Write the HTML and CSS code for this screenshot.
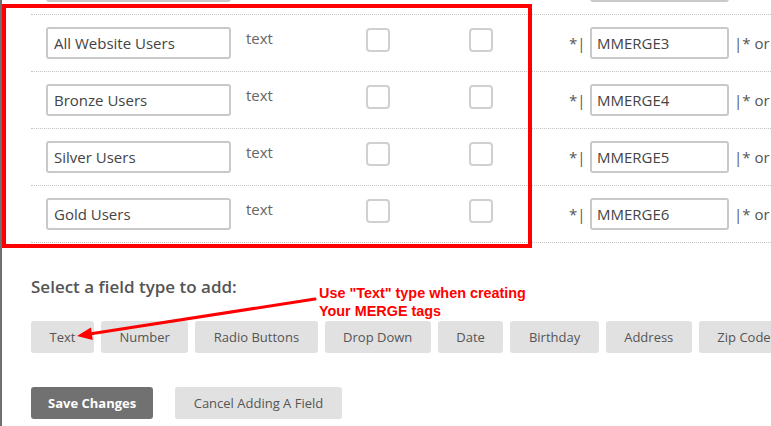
FILE: index.html
```html
<!DOCTYPE html>
<html lang="en">
<head>
<meta charset="utf-8">
<title>Merge fields</title>
<link rel="stylesheet" href="styles.css">
</head>
<body>
<div class="page">
  <div class="fields">
    <div class="row">
      <div class="name-cell"><input class="field-input name-input" type="text" value=""></div>
      <div class="type-label"></div>
      <div class="check-cell"><span class="check"></span></div>
      <div class="check-cell"><span class="check"></span></div>
      <div class="tag-open"></div>
      <div class="tag-cell"><input class="field-input tag-input" type="text" value=""></div>
      <div class="tag-close"></div>
    </div>
    <div class="row">
      <div class="name-cell"><input class="field-input name-input" type="text" value="All Website Users"></div>
      <div class="type-label">text</div>
      <div class="check-cell"><span class="check"></span></div>
      <div class="check-cell"><span class="check"></span></div>
      <div class="tag-open">*|</div>
      <div class="tag-cell"><input class="field-input tag-input" type="text" value="MMERGE3"></div>
      <div class="tag-close">|* or</div>
    </div>
    <div class="row">
      <div class="name-cell"><input class="field-input name-input" type="text" value="Bronze Users"></div>
      <div class="type-label">text</div>
      <div class="check-cell"><span class="check"></span></div>
      <div class="check-cell"><span class="check"></span></div>
      <div class="tag-open">*|</div>
      <div class="tag-cell"><input class="field-input tag-input" type="text" value="MMERGE4"></div>
      <div class="tag-close">|* or</div>
    </div>
    <div class="row">
      <div class="name-cell"><input class="field-input name-input" type="text" value="Silver Users"></div>
      <div class="type-label">text</div>
      <div class="check-cell"><span class="check"></span></div>
      <div class="check-cell"><span class="check"></span></div>
      <div class="tag-open">*|</div>
      <div class="tag-cell"><input class="field-input tag-input" type="text" value="MMERGE5"></div>
      <div class="tag-close">|* or</div>
    </div>
    <div class="row">
      <div class="name-cell"><input class="field-input name-input" type="text" value="Gold Users"></div>
      <div class="type-label">text</div>
      <div class="check-cell"><span class="check"></span></div>
      <div class="check-cell"><span class="check"></span></div>
      <div class="tag-open">*|</div>
      <div class="tag-cell"><input class="field-input tag-input" type="text" value="MMERGE6"></div>
      <div class="tag-close">|* or</div>
    </div>
  </div>

  <h3 class="add-title">Select a field type to add:</h3>
  <div class="types">
    <button class="btn">Text</button>
    <button class="btn">Number</button>
    <button class="btn">Radio Buttons</button>
    <button class="btn">Drop Down</button>
    <button class="btn">Date</button>
    <button class="btn">Birthday</button>
    <button class="btn">Address</button>
    <button class="btn">Zip Code</button>
  </div>

  <div class="actions">
    <button class="btn btn-dark">Save Changes</button>
    <button class="btn">Cancel Adding A Field</button>
  </div>
</div>

<div class="highlight"></div>
<div class="note">Use "Text" type when creating<br>Your MERGE tags</div>
<svg class="arrow" width="771" height="426" viewBox="0 0 771 426" aria-hidden="true">
  <line x1="315" y1="299" x2="91" y2="333.7" stroke="#ff0000" stroke-width="3" stroke-linecap="round"/>
  <polygon points="77,336 92.7,340 90.9,327.6" fill="#ff0000"/>
</svg>
</body>
</html>
```

FILE: styles.css
```css
html, body {
  margin: 0;
  padding: 0;
  background: #ffffff;
}

body {
  position: relative;
  width: 771px;
  height: 426px;
  overflow: hidden;
  font-family: "Open Sans", "Liberation Sans", sans-serif;
}

.page {
  box-sizing: border-box;
  height: 426px;
  border-left: 2px solid #707070;
  padding-left: 29px;
  overflow: hidden;
}

.fields {
  margin-top: -42px;
}

.row {
  display: grid;
  grid-template-columns: 215px 120px 103px 100px 21px 144px 1fr;
  align-items: start;
  box-sizing: border-box;
  height: 57px;
  padding-top: 12px;
  border-bottom: 1px dotted #c4c4c4;
}

.name-cell {
  padding-left: 15px;
}

.field-input {
  display: block;
  box-sizing: border-box;
  height: 32px;
  margin: 0;
  border: 2px solid #c9c9c9;
  border-radius: 3px;
  background: #ffffff;
  font-family: "Open Sans", "Liberation Sans", sans-serif;
  font-size: 15px;
  color: #444444;
  outline: none;
}

.name-input {
  width: 185px;
  padding: 0 6px;
}

.tag-input {
  width: 139px;
  padding: 0 5px;
}

.type-label {
  margin-top: 1px;
  font-size: 15px;
  line-height: 20px;
  color: #666666;
}

.check-cell {
  padding-top: 1px;
}

.check {
  display: block;
  box-sizing: border-box;
  width: 24px;
  height: 24px;
  border: 2px solid #d0d0d0;
  border-radius: 4px;
  background: #ffffff;
}

.tag-open,
.tag-close {
  display: flex;
  align-items: center;
  height: 32px;
  font-size: 15px;
  color: #555555;
  white-space: nowrap;
}

.add-title {
  margin: 32px 0 0;
  font-size: 17px;
  line-height: 24px;
  font-weight: 600;
  color: #555555;
}

.types {
  display: flex;
  gap: 7px;
  margin-top: 22px;
  white-space: nowrap;
}

.btn {
  flex: none;
  height: 32px;
  margin: 0;
  padding: 0 18.5px;
  border: none;
  border-radius: 3px;
  background: #e1e1e1;
  font-family: "Open Sans", "Liberation Sans", sans-serif;
  font-size: 13px;
  color: #555555;
  white-space: nowrap;
}

.actions {
  display: flex;
  gap: 22px;
  margin-top: 34px;
}

.btn-dark {
  padding: 0 17px;
  background: #717171;
  color: #ffffff;
  font-weight: 700;
}

.highlight {
  position: absolute;
  left: 2px;
  top: 4px;
  width: 530px;
  height: 244px;
  box-sizing: border-box;
  border: 4px solid #ff0000;
  pointer-events: none;
}

.note {
  position: absolute;
  left: 319px;
  top: 285px;
  font-family: "Liberation Sans", Arial, sans-serif;
  font-weight: 700;
  font-size: 14.4px;
  line-height: 17.5px;
  color: #ff0000;
  white-space: nowrap;
}

.arrow {
  position: absolute;
  left: 0;
  top: 0;
  pointer-events: none;
}
```
